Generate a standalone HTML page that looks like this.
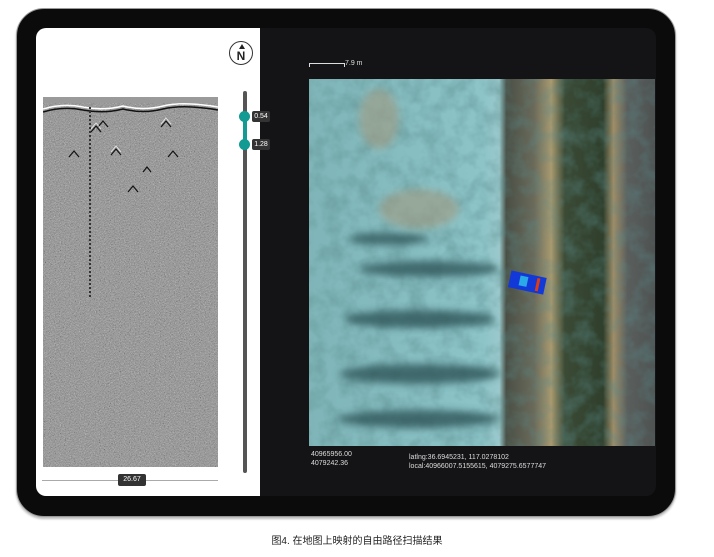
<!DOCTYPE html><html><head><meta charset="utf-8"><style>
body{margin:0;width:714px;height:557px;background:#fff;position:relative;overflow:hidden;font-family:"Liberation Sans","Noto Sans CJK SC",sans-serif}
.dev{position:absolute;left:16px;top:8px;width:660px;height:509px;background:#0b0b0c;border-radius:28px;box-shadow:0 2px 2px #bbb;border:1px solid #999;box-sizing:border-box}
.scr{position:absolute;left:36px;top:28px;width:620px;height:468px;border-radius:10px;overflow:hidden;background:#141416}
.wp{position:absolute;left:0;top:0;width:224px;height:468px;background:#fff}
.t{position:absolute;color:#ddd;font-size:7px;line-height:9px}
</style></head><body>
<div class="dev"></div>
<div class="scr">
<div class="wp">
<div style="position:absolute;left:193px;top:13px;width:24px;height:24px;border:1.5px solid #333;border-radius:50%;box-sizing:border-box;text-align:center;font-size:12px;line-height:28px;color:#222;font-weight:bold">N</div>
<div style="position:absolute;left:202.5px;top:16px;width:0;height:0;border-left:3px solid transparent;border-right:3px solid transparent;border-bottom:5px solid #222"></div>
<svg style="position:absolute;left:7px;top:69px" width="175" height="370">
<defs>
<filter id="n2"><feTurbulence type="fractalNoise" baseFrequency="0.8 1.4" numOctaves="2" seed="5"/><feColorMatrix type="saturate" values="0"/><feComponentTransfer><feFuncR type="linear" slope="1.8" intercept="-.4"/><feFuncG type="linear" slope="1.8" intercept="-.4"/><feFuncB type="linear" slope="1.8" intercept="-.4"/></feComponentTransfer></filter></defs>
<rect width="175" height="370" fill="#8a8a8a"/>
<rect width="175" height="370" filter="url(#n2)" opacity=".7"/>
<rect width="175" height="6" fill="#9a9a9a"/>
<path d="M0 12 Q20 6 40 10 T80 9 Q100 14 120 9 T175 10" stroke="#fff" stroke-width="1.5" fill="none"/>
<path d="M0 15 Q20 9 40 13 T80 12 Q100 17 120 12 T175 13" stroke="#111" stroke-width="1.5" fill="none"/>
<g stroke="#111" fill="none" stroke-width="1.2"><path d="M48 35 l5 -6 l5 6"/><path d="M118 30 l5 -6 l5 6"/><path d="M68 58 l5-6 5 6"/><path d="M26 60 l5-6 5 6"/><path d="M125 60 l5-6 5 6"/><path d="M55 30 l5-6 5 6"/><path d="M100 75 l4-5 4 5"/><path d="M85 95 l5-6 5 6"/></g>
<g stroke="#fff" fill="none" stroke-width=".8" opacity=".8"><path d="M48 32 l5 -6 l5 6"/><path d="M118 27 l5 -6 l5 6"/><path d="M68 55 l5-6 5 6"/></g>
<line x1="47" y1="10" x2="47" y2="200" stroke="#333" stroke-width="2" stroke-dasharray="2 2"/>
</svg>
<div style="position:absolute;left:207px;top:63px;width:4px;height:382px;background:#555;border-radius:2px"></div>
<div style="position:absolute;left:207px;top:89px;width:4px;height:28px;background:#129a93"></div>
<div style="position:absolute;left:203px;top:83px;width:11px;height:11px;border-radius:50%;background:#129a93"></div>
<div style="position:absolute;left:203px;top:111px;width:11px;height:11px;border-radius:50%;background:#129a93"></div>
<div style="position:absolute;left:216px;top:83px;width:18px;height:11px;background:#333;color:#fff;font-size:7px;line-height:11px;text-align:center;border-radius:2px">0.54</div>
<div style="position:absolute;left:216px;top:111px;width:18px;height:11px;background:#333;color:#fff;font-size:7px;line-height:11px;text-align:center;border-radius:2px">1.28</div>
<div style="position:absolute;left:6px;top:452px;width:176px;height:1px;background:#aaa"></div>
<div style="position:absolute;left:82px;top:446px;width:28px;height:12px;background:#333;color:#fff;font-size:7px;line-height:12px;text-align:center;border-radius:2px">26.67</div>
</div>
<svg style="position:absolute;left:273px;top:51px" width="346" height="367">
<defs><linearGradient id="g" x1="0" x2="1"><stop offset="0" stop-color="#7fb5b8"/><stop offset=".5" stop-color="#8cc4c8"/><stop offset=".55" stop-color="#9ac9cc"/><stop offset=".57" stop-color="#4a4f45"/><stop offset=".65" stop-color="#6a6a5a"/><stop offset=".7" stop-color="#a89a70"/><stop offset=".74" stop-color="#3a4a35"/><stop offset=".85" stop-color="#2f3f2c"/><stop offset=".88" stop-color="#a08e68"/><stop offset=".92" stop-color="#5a5e5c"/><stop offset="1" stop-color="#4e5352"/></linearGradient><filter id="b"><feGaussianBlur stdDeviation="4"/></filter>
<filter id="tx"><feTurbulence type="fractalNoise" baseFrequency="0.06" numOctaves="3" seed="8"/><feColorMatrix values="0 0 0 0 0.1 0 0 0 0 0.25 0 0 0 0 0.25 0 0 0 -1.4 0.9"/></filter></defs>
<rect width="346" height="367" fill="url(#g)"/>
<rect width="346" height="367" filter="url(#tx)" opacity=".6"/>
<g filter="url(#b)" fill="#2e5558" opacity=".8"><ellipse cx="120" cy="190" rx="70" ry="8"/><ellipse cx="110" cy="240" rx="75" ry="9"/><ellipse cx="110" cy="295" rx="80" ry="10"/><ellipse cx="110" cy="340" rx="80" ry="9"/><ellipse cx="80" cy="160" rx="40" ry="6"/></g>
<g filter="url(#b)" fill="#a09a80" opacity=".6"><ellipse cx="110" cy="130" rx="40" ry="20"/><ellipse cx="70" cy="40" rx="20" ry="30"/></g>
<g transform="rotate(12 218 205)"><rect x="200" y="195" width="36" height="17" fill="#1238d8"/><rect x="210" y="198" width="8" height="10" fill="#2aa8e8"/><rect x="227" y="197" width="3" height="13" fill="#e03a10"/></g>
</svg>
<div style="position:absolute;left:273px;top:35px;width:34px;height:3px;border-top:1px solid #ddd;border-left:1px solid #ddd;border-right:1px solid #ddd"></div>
<div class="t" style="left:309px;top:31px">7.9 m</div>
<div class="t" style="left:275px;top:422px">40965956.00<br>4079242.36</div>
<div class="t" style="left:373px;top:425px">latlng:36.6945231, 117.0278102<br>local:40966007.5155615, 4079275.6577747</div>
</div>
<div style="position:absolute;left:0;width:714px;top:532px;text-align:center;font-size:10px;color:#222">图4. 在地图上映射的自由路径扫描结果</div>
</body></html>
